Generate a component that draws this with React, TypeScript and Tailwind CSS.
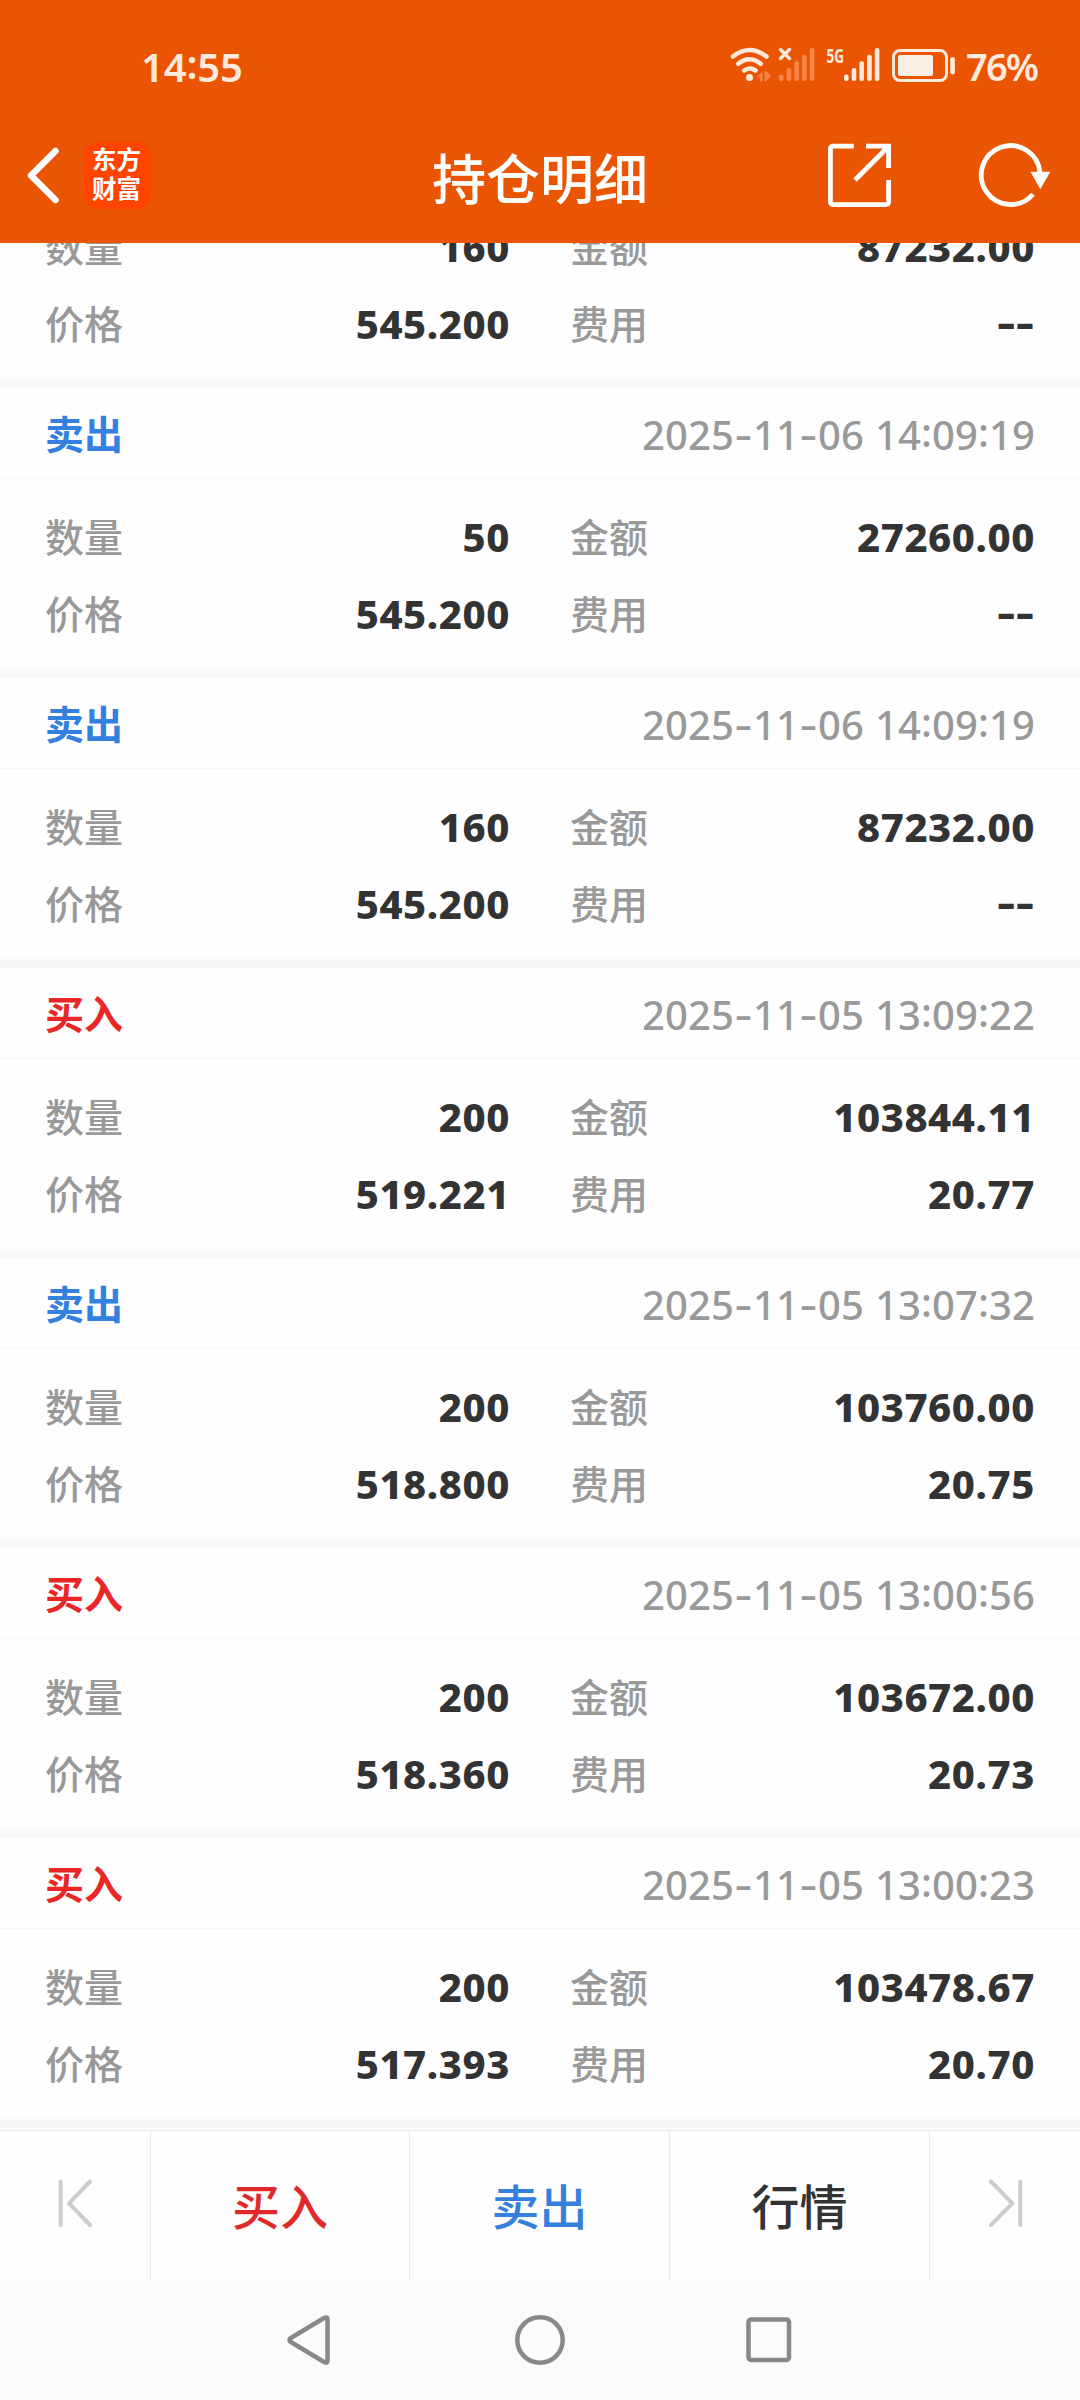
import React from "react";

interface TradeRecord {
  id: number;
  side: "buy" | "sell";
  time: string;
  amount: string;
  price: string;
  total: string;
  fee: string;
}

const records: TradeRecord[] = [
  { id: 1, side: "sell", time: "2025-11-06 14:09:19", amount: "160", price: "545.200", total: "87232.00", fee: "--" },
  { id: 2, side: "sell", time: "2025-11-06 14:09:19", amount: "50", price: "545.200", total: "27260.00", fee: "--" },
  { id: 3, side: "sell", time: "2025-11-06 14:09:19", amount: "160", price: "545.200", total: "87232.00", fee: "--" },
  { id: 4, side: "buy", time: "2025-11-05 13:09:22", amount: "200", price: "519.221", total: "103844.11", fee: "20.77" },
  { id: 5, side: "sell", time: "2025-11-05 13:07:32", amount: "200", price: "518.800", total: "103760.00", fee: "20.75" },
  { id: 6, side: "buy", time: "2025-11-05 13:00:56", amount: "200", price: "518.360", total: "103672.00", fee: "20.73" },
  { id: 7, side: "buy", time: "2025-11-05 13:00:23", amount: "200", price: "517.393", total: "103478.67", fee: "20.70" },
];

const BARS = [0, 1, 2, 3, 4];

function SignalBars({ color }: { color: string }) {
  return (
    <g fill={color}>
      {BARS.map((i) => (
        <rect key={i} x={i * 7.7} y={26.5 - i * 6.6} width="4.6" height={6.5 + i * 6.6} rx="2" />
      ))}
    </g>
  );
}

function StatusBar() {
  return (
    <div className="flex h-[106px] items-start text-[#ffeadd]">
      <span className="mt-[44px] ml-[141px] w-[587px] text-[40px] leading-[46px] font-semibold tracking-[-0.2px]">
        14<span className="inline-block -translate-y-[3px]">:</span>55
      </span>
      <svg className="mt-[44px] shrink-0 overflow-visible" width="232" height="46" viewBox="728 44 232 46" fill="none">
        {/* wifi */}
        <g stroke="#ffeadd" strokeWidth="4.6" strokeLinecap="round">
          <path d="M733 56.5Q749.5 43.5 766.5 56.5" />
          <path d="M738.3 63.7Q749.5 54.8 760.7 63.7" />
          <path d="M744.3 70.5Q749.5 66.5 755.5 70.5" />
        </g>
        <circle cx="749.5" cy="77.5" r="3.5" fill="#ffeadd" />
        <path d="M756.5 77.5L762.5 71.5V81.5H760V77.5ZM764.5 71.5H766.5L771 75.5L766 81.5H764.5Z" fill="#f6834a" />
        {/* sim 1, no service */}
        <path d="M780.5 49.5L789.5 58.5M789.5 49.5L780.5 58.5" stroke="#ffeadd" strokeWidth="3.4" strokeLinecap="round" />
        <g transform="translate(779 48)">
          <SignalBars color="#fa8748" />
        </g>
        {/* sim 2 */}
        <text x="826.5" y="62.5" fontSize="20" fontWeight="700" fill="#ffeadd" textLength="17.5" lengthAdjust="spacingAndGlyphs">
          5G
        </text>
        <g transform="translate(844 48)">
          <SignalBars color="#ffeadd" />
        </g>
        {/* battery */}
        <rect x="893.5" y="50.5" width="53" height="30" rx="6.5" stroke="#ffeadd" strokeWidth="3" />
        <rect x="898" y="55" width="35" height="21" rx="2" fill="#fdeee6" />
        <rect x="950.3" y="57" width="4.6" height="17.5" rx="2.3" fill="#ffeadd" />
      </svg>
      <span className="mt-[43px] ml-[6px] text-[38px] leading-[46px] font-semibold tracking-[-1.8px]">76%</span>
    </div>
  );
}

function TitleBar() {
  return (
    <div className="grid h-[137px] grid-cols-3 items-start text-white">
      <div className="flex pl-[22px]">
        <svg className="mt-[36px]" width="44" height="67" viewBox="22 142 44 67" fill="none">
          <path d="M55.5 151L31 175.5L55.5 200" stroke="#fff" strokeWidth="6.5" strokeLinecap="round" strokeLinejoin="round" />
        </svg>
        <div className="mt-[36px] ml-[18px] h-[67px] w-[67px] rounded-[14px] bg-[#ff4400] pt-[3px] pl-[8px]">
          <p className="w-[51px] text-[24.5px] leading-[29px] font-bold break-all">东方财富</p>
        </div>
      </div>
      <h1 className="mt-[38px] text-center text-[54px] leading-[70px] font-medium">持仓明细</h1>
      <div className="flex justify-end gap-[84px] pr-[29px]">
        <svg className="mt-[36px]" width="65" height="67" viewBox="827 142 65 67" fill="none" stroke="#fff" strokeWidth="4.8">
          <path d="M853.8 146.2H833a2.6 2.6 0 0 0-2.6 2.6V202a2.6 2.6 0 0 0 2.6 2.6H886a2.6 2.6 0 0 0 2.6-2.6V180" />
          <path d="M866 146.2H888.6V168M888 147L855 180" />
        </svg>
        <svg className="mt-[36px]" width="75" height="67" viewBox="976 142 75 67" fill="none">
          <path d="M1033 194.2A29.4 29.4 0 1 1 1040 173" stroke="#fff" strokeWidth="4.8" />
          <path d="M1030.5 171.8H1050.3L1040.3 189.3Z" fill="#fff" />
        </svg>
      </div>
    </div>
  );
}

// the separators sit higher and wider than the font's own, so they get their own boxes
function TradeTime({ value }: { value: string }) {
  return (
    <span className="flex text-[40px] font-medium text-[#999999]">
      {value.split("").map((char, i) => {
        if (char === "-") {
          return (
            <span key={i} className="w-[19px] -translate-y-[1px] scale-x-[1.35] text-center">
              -
            </span>
          );
        }
        if (char === ":") {
          return (
            <span key={i} className="w-[11px] -translate-y-[3px] text-center">
              :
            </span>
          );
        }
        if (char === " ") {
          return (
            <span key={i} className="w-[11px] whitespace-pre">
              {" "}
            </span>
          );
        }
        return (
          <span key={i} className="w-[23px] text-center">
            {char}
          </span>
        );
      })}
    </span>
  );
}

function Field({ label, value }: { label: string; value: string }) {
  return (
    <div className="flex h-[77px] items-center justify-between">
      <span className="text-[39px] font-medium text-[#999999]">{label}</span>
      {value === "--" ? (
        <span className="mb-[5px] origin-right scale-x-[1.4] text-[40px] font-extrabold tracking-[0.6px] text-[#333333]">--</span>
      ) : (
        <span className="mb-[2px] text-[40px] font-extrabold tracking-[0.6px] text-[#333333]">{value}</span>
      )}
    </div>
  );
}

function RecordCard({ item, headless }: { item: TradeRecord; headless: boolean }) {
  return (
    <div className="shrink-0 border-b-[9px] border-[#f7f8fa] bg-[#fefefe]">
      {!headless && (
        <div className="flex h-[91px] items-center justify-between border-b border-[#f5f5f5] px-[45px] pt-[3px]">
          {item.side === "buy" ? (
            <span className="text-[39px] font-bold text-[#ea2626]">买入</span>
          ) : (
            <span className="text-[39px] font-bold text-[#3480e0]">卖出</span>
          )}
          <TradeTime value={item.time} />
        </div>
      )}
      <div className="grid h-[190px] grid-cols-2 content-start gap-x-[60px] px-[45px] pt-[20px]">
        <Field label="数量" value={item.amount} />
        <Field label="金额" value={item.total} />
        <Field label="价格" value={item.price} />
        <Field label="费用" value={item.fee} />
      </div>
    </div>
  );
}

function TabBar() {
  return (
    <div className="mt-[2px] flex h-[150px] border-t border-[#eaeaea] text-[48px] leading-[72px] font-medium">
      <div className="w-[150px] pt-[46px] pl-[56px]">
        <svg width="40" height="52" viewBox="56 2177 40 52" fill="none" stroke="#cccccc" strokeWidth="4" strokeLinecap="round" strokeLinejoin="round">
          <path d="M60.7 2181.5V2225M90 2181.5L69 2203.3L90 2225" />
        </svg>
      </div>
      <div className="w-[259px] border-l border-[#eaeaea] pt-[40px] text-center text-[#e02a2a]">买入</div>
      <div className="w-[260px] border-l border-[#eaeaea] pt-[40px] text-center text-[#3480dc]">卖出</div>
      <div className="w-[260px] border-l border-[#eaeaea] pt-[40px] text-center text-[#333333]">行情</div>
      <div className="flex flex-1 border-l border-[#eaeaea] pt-[46px] pl-[55px]">
        <svg width="40" height="52" viewBox="985 2177 40 52" fill="none" stroke="#cccccc" strokeWidth="4" strokeLinecap="round" strokeLinejoin="round">
          <path d="M1020.3 2181.5V2225M991 2181.5L1012.3 2203.3L991 2225" />
        </svg>
      </div>
    </div>
  );
}

function SystemNav() {
  return (
    <div className="flex h-[120px] items-center justify-center gap-[180px] bg-[#fbfbfb]">
      <svg width="50" height="50" viewBox="285 2315 50 50" fill="none" stroke="#888888" strokeWidth="4.5" strokeLinejoin="round">
        <path d="M290.4 2338.2L324.5 2317.8Q327.5 2316.5 327.5 2319.5V2360.5Q327.5 2363.5 324.5 2362.2L290.4 2341.8Q288.5 2340 290.4 2338.2Z" />
      </svg>
      <svg width="50" height="50" fill="none">
        <circle cx="25" cy="25" r="22.7" stroke="#888888" strokeWidth="4.5" />
      </svg>
      <svg width="50" height="50" fill="none">
        <rect x="3.5" y="4.5" width="40.5" height="40.5" rx="2.5" stroke="#888888" strokeWidth="4.5" />
      </svg>
    </div>
  );
}

export default function App() {
  return (
    <div className="flex h-[2400px] w-[1080px] flex-col overflow-hidden bg-[#fefefe] font-['Noto_Sans','Noto_Sans_CJK_SC',sans-serif]">
      <header className="h-[243px] shrink-0 bg-[#ea5503]">
        <StatusBar />
        <TitleBar />
      </header>
      {/* list is scrolled, the first record shows only its lower part */}
      <main className="flex h-[1885px] shrink-0 flex-col justify-end overflow-hidden">
        {records.map((item, index) => (
          <RecordCard key={item.id} item={item} headless={index === 0} />
        ))}
      </main>
      <TabBar />
      <SystemNav />
    </div>
  );
}
